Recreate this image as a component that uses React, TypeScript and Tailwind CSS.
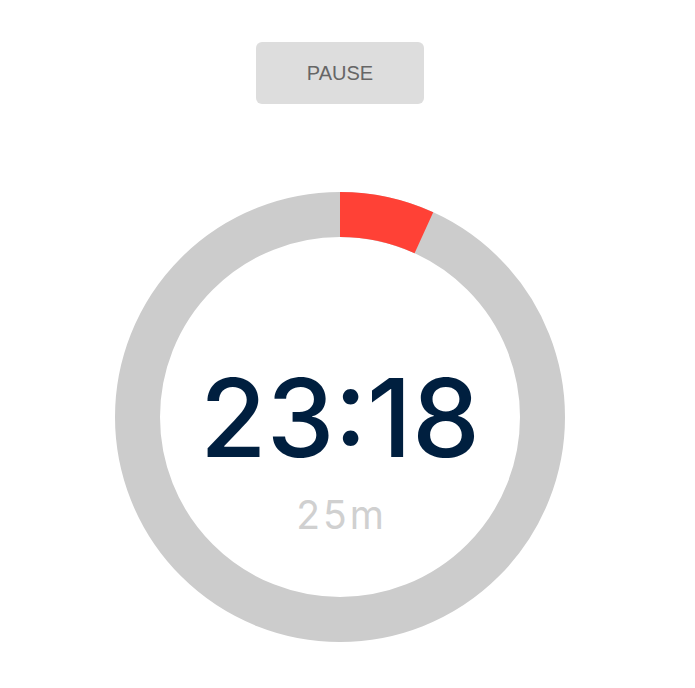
const SIZE = 450
const STROKE = 45
const R = (SIZE - STROKE) / 2
const CIRC = 2 * Math.PI * R

export default function App() {
  const total = 25 * 60
  const left = 23 * 60 + 18
  const progress = (total - left) / total

  return (
    <div className="flex min-h-screen w-[680px] flex-col items-center bg-white pt-[42px]">
      <button className="h-[62px] w-[168px] rounded-md bg-[#dddddd] text-[20px] text-[#666666] [font-family:'Liberation_Sans',Arial,sans-serif]">
        PAUSE
      </button>

      <div className="relative mt-[88px] h-[450px] w-[450px]">
        <svg width={SIZE} height={SIZE} viewBox={`0 0 ${SIZE} ${SIZE}`} className="-rotate-90">
          <circle cx={SIZE / 2} cy={SIZE / 2} r={R} fill="none" stroke="#cccccc" strokeWidth={STROKE} />
          <circle
            cx={SIZE / 2}
            cy={SIZE / 2}
            r={R}
            fill="none"
            stroke="#ff4136"
            strokeWidth={STROKE}
            strokeDasharray={`${CIRC * progress} ${CIRC}`}
          />
        </svg>

        {/* time readout */}
        <div className="absolute inset-0 flex flex-col items-center justify-center pt-[64px] [font-family:Inter,'Noto_Sans',sans-serif]">
          <div className="text-[108px] font-medium leading-none text-[#001f3f]">23:18</div>
          <div className="mt-[23px] pl-[3px] text-[39px] leading-none tracking-[3px] text-[#d0d0d0]">25m</div>
        </div>
      </div>
    </div>
  )
}
